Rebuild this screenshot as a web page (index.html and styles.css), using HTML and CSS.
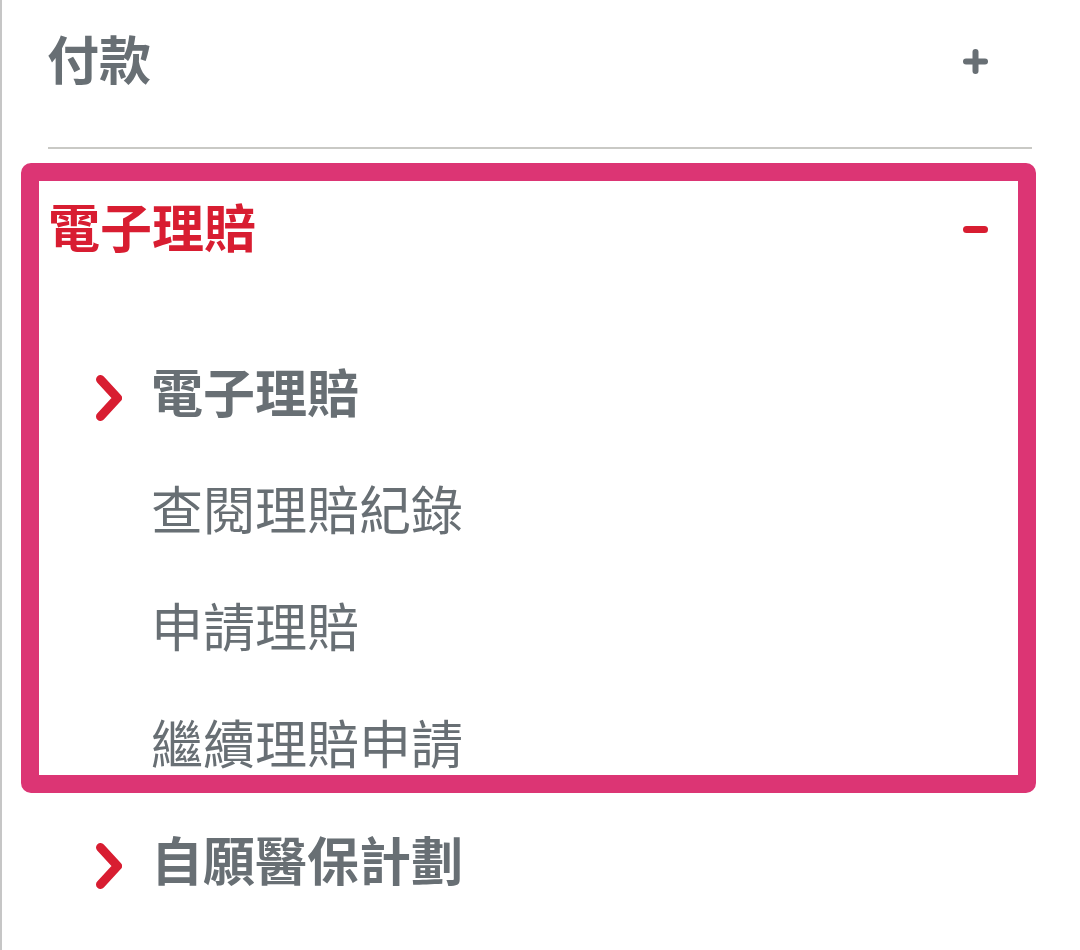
FILE: index.html
```html
<!DOCTYPE html>
<html lang="zh-Hant">
<head>
<meta charset="utf-8">
<title>選單</title>
<link rel="stylesheet" href="styles.css">
</head>
<body>
<div class="page">
  <div class="acc-head">
    <span class="acc-title">付款</span>
    <svg class="icon-toggle" width="25" height="25" viewBox="0 0 25 25" aria-hidden="true">
      <line x1="12.5" y1="3" x2="12.5" y2="22" stroke="#686f74" stroke-width="6" stroke-linecap="round"/>
      <line x1="3" y1="12.5" x2="22" y2="12.5" stroke="#686f74" stroke-width="6" stroke-linecap="round"/>
    </svg>
  </div>
  <div class="divider"></div>

  <section class="acc-open">
    <div class="acc-head acc-head--open">
      <span class="acc-title acc-title--red">電子理賠</span>
      <svg class="icon-toggle" width="25" height="25" viewBox="0 0 25 25" aria-hidden="true">
        <line x1="3.5" y1="12.5" x2="21.5" y2="12.5" stroke="#d81d31" stroke-width="7" stroke-linecap="round"/>
      </svg>
    </div>
    <ul class="sub-list">
      <li class="sub-item sub-item--active">
        <svg class="chev" width="26" height="46" viewBox="0 0 26 46" aria-hidden="true">
          <path d="M4.5 4.5 L21.5 23 L4.5 41.5" fill="none" stroke="#d81d31" stroke-width="9" stroke-linecap="round" stroke-linejoin="round"/>
        </svg>
        <span class="sub-text sub-text--bold">電子理賠</span>
      </li>
      <li class="sub-item"><span class="chev-space"></span><span class="sub-text">查閱理賠紀錄</span></li>
      <li class="sub-item"><span class="chev-space"></span><span class="sub-text">申請理賠</span></li>
      <li class="sub-item"><span class="chev-space"></span><span class="sub-text">繼續理賠申請</span></li>
    </ul>
  </section>

  <div class="sub-item sub-item--outer">
    <svg class="chev" width="26" height="46" viewBox="0 0 26 46" aria-hidden="true">
      <path d="M4.5 4.5 L21.5 23 L4.5 41.5" fill="none" stroke="#d81d31" stroke-width="9" stroke-linecap="round" stroke-linejoin="round"/>
    </svg>
    <span class="sub-text sub-text--bold">自願醫保計劃</span>
  </div>
</div>
</body>
</html>
```

FILE: styles.css
```css
* { box-sizing: border-box; }

html, body {
  margin: 0;
  padding: 0;
  background: #ffffff;
}

body {
  font-family: "Noto Sans CJK TC", "Noto Sans CJK SC", "Noto Sans", sans-serif;
  color: #686f74;
}

.page {
  width: 1080px;
  height: 950px;
  border-left: 2px solid #c6c6c6;
  overflow: hidden;
}

.acc-head {
  height: 122px;
  display: flex;
  align-items: center;
  justify-content: space-between;
  padding: 0 92px 0 45px;
}

.acc-title {
  font-size: 52px;
  font-weight: 700;
  line-height: 60px;
  margin-bottom: 6px;
  color: #686f74;
}

.acc-title--red {
  color: #d81d31;
}

.icon-toggle {
  display: block;
  flex: none;
}

.divider {
  height: 2px;
  background: #c9c9c5;
  margin: 25px 48px 0 46px;
}

.acc-open {
  margin: 14px 44px 0 19px;
  border: 18px solid #dc3574;
  border-radius: 10px;
  height: 630px;
  overflow: visible;
}

.acc-head--open {
  height: 96px;
  padding: 0 30px 0 9px;
}

.sub-list {
  list-style: none;
  margin: 0;
  padding: 87px 0 0 57px;
  display: flex;
  flex-direction: column;
  gap: 57px;
}

.sub-item {
  height: 60px;
  display: flex;
  align-items: center;
}

.sub-item--outer {
  margin: 39px 0 0 94px;
}

.chev {
  display: block;
  flex: none;
  width: 26px;
  height: 46px;
  margin: 8px 29px 0 0;
}

.chev-space {
  display: block;
  flex: none;
  width: 55px;
}

.sub-text {
  font-size: 52px;
  line-height: 60px;
  font-weight: 400;
  margin-bottom: 6px;
  color: #686f74;
  white-space: nowrap;
}

.sub-text--bold {
  font-weight: 700;
}
```
